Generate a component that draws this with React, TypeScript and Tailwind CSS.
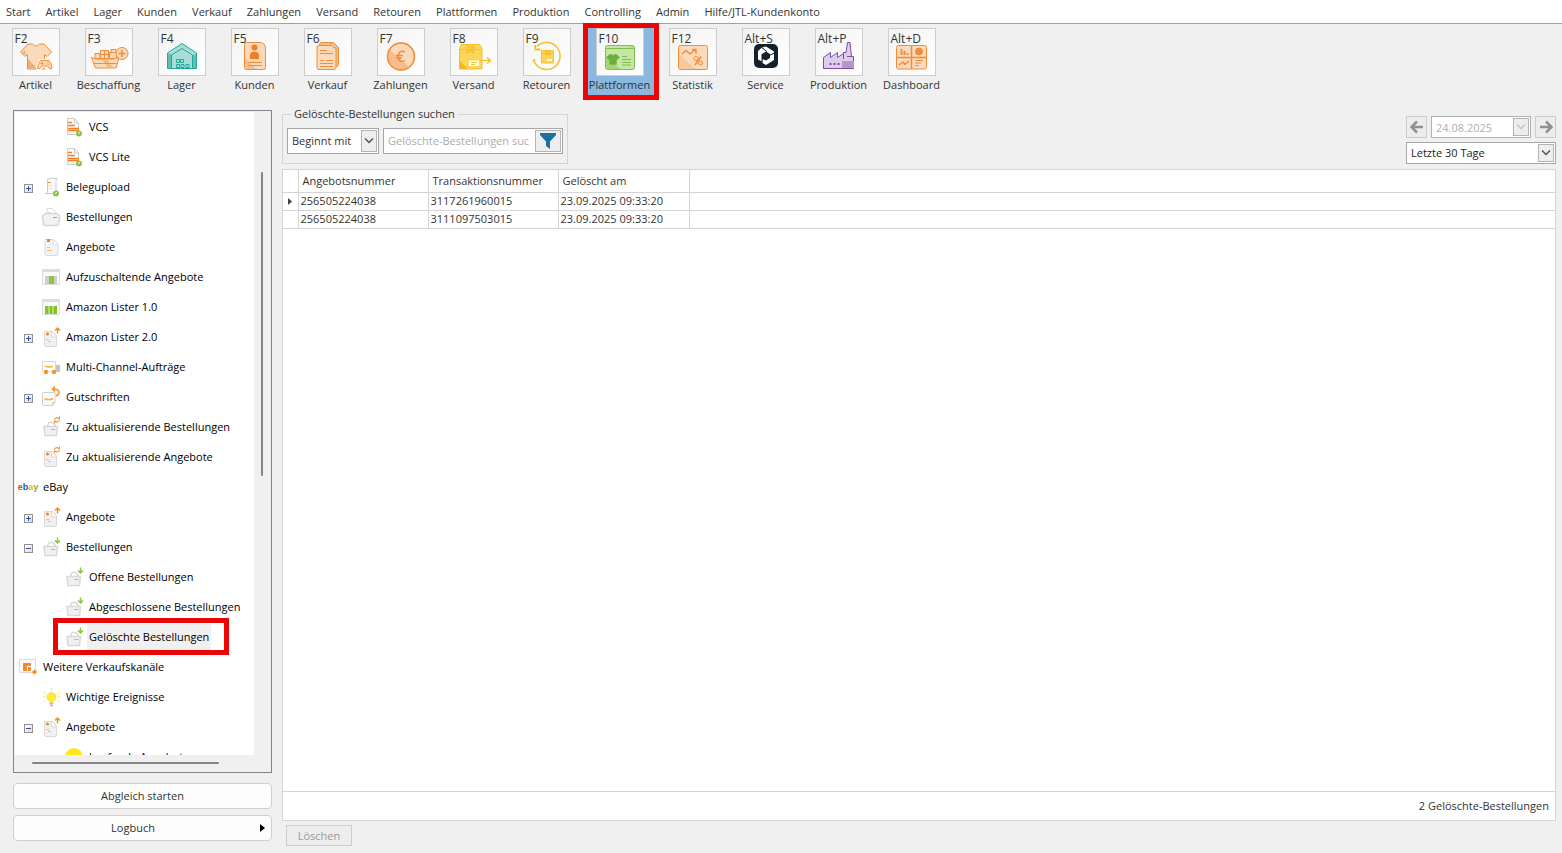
import type { ReactNode } from "react";
import clsx from "clsx";

const MENU = [
    "Start",
    "Artikel",
    "Lager",
    "Kunden",
    "Verkauf",
    "Zahlungen",
    "Versand",
    "Retouren",
    "Plattformen",
    "Produktion",
    "Controlling",
    "Admin",
    "Hilfe/JTL-Kundenkonto",
];

const ORANGE = { fill: "#fbd9bb", stroke: "#ee8e3c" };
const YELLOW = { fill: "#fcd65a", stroke: "#f6c12c" };

/* ---------- toolbar icons, drawn on the 48px tile ---------- */

const SHIRT = "M16 16h4.500q3.500 4 7 0h4.500l7.500 8-4.500 4.500-2.500-2V41H15.500V26.500l-2.500 2L8.500 24z";

const toolIcons: Record<string, ReactNode> = {
    Artikel: (
        <g {...ORANGE}>
            <path d={SHIRT} />
            <path d="M16 31l9 9.500h-9zM10 25l3-3 1 5z" fill="#f3ad70" stroke="none" />
            <path d="M28.500 32.500h8.500q2.500 2 3 8-2.500 1.500-4.500-2.500h-5.500q-2 4-4.500 2.500.500-6 3-8z" stroke="#fff" strokeWidth="3" />
            <path d="M28.500 32.500h8.500q2.500 2 3 8-2.500 1.500-4.500-2.500h-5.500q-2 4-4.500 2.500.500-6 3-8z" />
            <path d="M28.500 35.500h3M30 34v3M35.500 34.500h1M35.500 36.500h1" />
        </g>
    ),
    Beschaffung: (
        <g {...ORANGE}>
            <path d="M10 25.500h5v5h-5zM15.500 22.500h8v8h-8zM24.500 24.500h7v6h-7zM26 21.500h5v3h-5z" />
            <path d="M15.500 26.500h8M19.500 22.500v8" />
            <path d="M6.500 29.500l4 1.500h18l5.500-1.500-3 10.500H10.500z" />
            <path d="M17 31.500h5l6 8h-5zM9 36h22" fill="#f3b883" stroke="none" />
            <path d="M9 35.500h22.500" />
            <circle cx="37" cy="25.500" r="6" />
            <path d="M33.500 25.500h7M37 22v7" strokeWidth="1.500" />
        </g>
    ),
    Lager: (
        <g fill="#a9ded8" stroke="#26a69a">
            <path d="M9.500 40.500V25L24 15.500 38.500 25v15.500z" />
            <path d="M10 25.500l3.500 1V40H10zM34.500 27l3.500-1V40h-3.500z" fill="#62bdb4" stroke="none" />
            <path d="M13.500 40.500V27L24 20.500 34.500 27v13.500z" />
            <path d="M18.500 31.500h3v3h-3zM22.500 31.500h3v3h-3zM18.500 36.500h3v3h-3zM23 36.500h3v3h-3zM28 36.500h3v3h-3z" />
        </g>
    ),
    Kunden: (
        <g {...ORANGE}>
            <path d="M15.500 14.500H29q5.500.500 5.500 6V39.500q0 2-2 2h-17q-2 0-2-2v-23q0-2 2-2z" />
            <path d="M14 30l11 11H15.500q-1.500 0-1.500-2z" fill="#f6bd8b" stroke="none" />
            <circle cx="23.500" cy="19.500" r="3" fill="#ee7f22" stroke="none" />
            <path d="M19 31v-4q0-3 4.500-3.500 4.500.500 4.500 3.500v4z" fill="#ee7f22" stroke="none" />
            <path d="M17 34.500h14M17 37.500h14" />
        </g>
    ),
    Verkauf: (
        <g {...ORANGE}>
            <path d="M17.500 14.500h12l5 5v17q0 2-2 2h-15q-2 0-2-2v-20q0-2 2-2z" fill="#f6bd8b" />
            <path d="M14.500 17.500h14l3.500 3v19q0 2-2 2H15q-2 0-2-2V19q0-1.500 1.500-1.500z" />
            <path d="M26.500 14.500q1 5 5 5.500" />
            <path d="M16 22.500h7M16 25.500h13M16 32.500h4M22 32.500h7M16 35.500h13M16 38.500h13" />
        </g>
    ),
    Zahlungen: (
        <g {...ORANGE}>
            <circle cx="24" cy="28.500" r="13.500" />
            <path d="M13 22l19.500 17.500Q24 44 16 38 8 31 13 22z" fill="#f6bd8b" stroke="none" />
            <circle cx="24" cy="28.500" r="13.500" fill="none" strokeWidth="1.500" />
            <path d="M28 24q-5-2.500-6.500 2.500-1 6 3 7 2 0 3.500-1M19 27.500h7M19 30h6" fill="none" strokeWidth="1.500" />
        </g>
    ),
    Versand: (
        <g {...YELLOW}>
            <path d="M11.500 16.500h18l2.500 4v20.500H9.500V20.500z" />
            <path d="M9.500 21.500H32M17 16.500v9l3.500-2.500 3.500 2.500v-9" fill="#f9c838" />
            <path d="M10 33l8 8h-8z" fill="#f4b827" stroke="none" />
            <path d="M19 32.500h10v5.500H19z" fill="#fff" stroke="none" />
            <path d="M21 34.500h6M21 36.500h4" />
            <path d="M30 32.500h10M37 29.500l3.500 3-3.500 3" fill="none" strokeWidth="1.500" />
        </g>
    ),
    Retouren: (
        <g {...YELLOW}>
            <path d="M14 18.500A13.500 13.500 0 1 1 11 33" fill="none" strokeWidth="1.500" />
            <path d="M12 17l.500 4.500h5" fill="none" strokeWidth="2" />
            <circle cx="11" cy="32.500" r="1" />
            <path d="M18.500 22.500h12v12.500h-12z" />
            <path d="M18.500 25.500h12M22.500 22.500v5l2-1.500 2 1.500v-5" fill="#f9c838" />
            <path d="M24 31h5v2h-5z" fill="#fff" stroke="none" />
        </g>
    ),
    Plattformen: (
        <g fill="#c5e6a6" stroke="#7fc04a">
            <rect x="9.500" y="17.500" width="29" height="24" rx="2" />
            <path d="M10 28l14 13H12q-2 0-2-2z" fill="#a5d57a" stroke="none" />
            <path d="M9.500 20.500h29" />
            <path d="M34 19h1M36 19h1" />
            <path d="M13.500 26.500h2q1.500 1.500 3 0h2l3 3-2 2-1-.500v5.500h-7V31l-1 .500-2-2z" fill="#6fae3c" />
            <path d="M26 28.500h5M26 31.500h9M26 34.500h9M26 37h9" />
        </g>
    ),
    Statistik: (
        <g {...ORANGE}>
            <rect x="9.500" y="17.500" width="29" height="24" rx="2" />
            <path d="M10 26l16 15H12q-2 0-2-2z" fill="#f8c79c" stroke="none" />
            <path d="M13 26l4-3.500 4 3.500 5.500-4.500M23 21.500h4v4" fill="none" strokeWidth="1.500" />
            <circle cx="27" cy="30.500" r="2" fill="none" />
            <circle cx="31.500" cy="35" r="2" fill="none" />
            <path d="M32 28.500l-6 8.500" strokeWidth="1.500" />
        </g>
    ),
    Service: (
        <g>
            <rect x="12" y="16" width="24" height="24" rx="5" fill="#14202b" />
            <path d="M20 19.500l4-1 8 5v8.500l-8 5-3.500-2V31l3.500 1.500 4-2.500v-4l-4-2.500-4 2.500v7.500l-4-2v-8.500z" fill="#fff" />
            <path d="M19.500 19.500l5.500 4M32 25l-4.500 2.500M20 34v-8" fill="none" stroke="#14202b" />
        </g>
    ),
    Produktion: (
        <g fill="#ddcdea" stroke="#7e4fa3">
            <path d="M8.500 40.500V29.500l7-5v5l7-5v5l6-4v-1h2.500l1.500-10h2.500l1.500 14h2v12z" />
            <path d="M27 33h12v7H27z" fill="#b795d0" stroke="none" />
            <path d="M8.500 40.500h30.500M28.500 25v6M32 28.500h5" />
            <path d="M14.500 36h2M18.500 36h2M22.500 36h2" strokeWidth="2" />
        </g>
    ),
    Dashboard: (
        <g {...ORANGE}>
            <rect x="8.500" y="17.500" width="30" height="23.500" rx="2" />
            <path d="M23.500 17.500v23.500M8.500 29.500h30" strokeWidth="1.500" />
            <path d="M13.500 21v6M16.500 23v4M19.500 25v2" strokeWidth="2" />
            <circle cx="31" cy="23.500" r="3.500" fill="#ee8e3c" />
            <path d="M11 37l4-3 2 2.500 4-3.500" fill="none" strokeWidth="1.500" />
            <path d="M27 32.500h8M27 35h6M27 37.500h4" />
        </g>
    ),
};

const TOOLS = [
    { hotkey: "F2", label: "Artikel" },
    { hotkey: "F3", label: "Beschaffung" },
    { hotkey: "F4", label: "Lager" },
    { hotkey: "F5", label: "Kunden" },
    { hotkey: "F6", label: "Verkauf" },
    { hotkey: "F7", label: "Zahlungen" },
    { hotkey: "F8", label: "Versand" },
    { hotkey: "F9", label: "Retouren" },
    { hotkey: "F10", label: "Plattformen", active: true },
    { hotkey: "F12", label: "Statistik" },
    { hotkey: "Alt+S", label: "Service" },
    { hotkey: "Alt+P", label: "Produktion" },
    { hotkey: "Alt+D", label: "Dashboard" },
];

function ToolButton({ hotkey, label, active }: { hotkey: string; label: string; active?: boolean }) {
    return (
        <button
            className={clsx(
                "relative flex h-[76px] w-[73px] shrink-0 flex-col items-center pt-1",
                active && "bg-[#8ab8de]",
            )}
        >
            <span className="relative size-12 border border-[#cdcdcd] bg-linear-to-br from-[#f3f3f3] to-white">
                <svg viewBox="1 1 46 46" className="block size-full" strokeLinejoin="round" aria-hidden="true">
                    {toolIcons[label]}
                </svg>
                <span className="absolute top-0.5 left-0.5 text-[12px] leading-4">{hotkey}</span>
            </span>
            <span className="leading-[18px]">{label}</span>
            {active && <span className="absolute -top-px -right-[3px] bottom-0 left-0 z-10 border-[5px] border-[#eb0505]" />}
        </button>
    );
}

/* ---------- tree ---------- */

type TreeIcon =
    | "invoice"
    | "upload"
    | "basket"
    | "offer"
    | "windowSmall"
    | "window"
    | "offerUp"
    | "truck"
    | "credit"
    | "basketSync"
    | "offerSync"
    | "ebay"
    | "basketDown"
    | "channels"
    | "bulb"
    | "dot";

interface TreeNode {
    level: 0 | 1 | 2;
    label: string;
    icon: TreeIcon;
    expander?: "plus" | "minus";
    selected?: boolean;
}

const TREE: TreeNode[] = [
    { level: 2, label: "VCS", icon: "invoice" },
    { level: 2, label: "VCS Lite", icon: "invoice" },
    { level: 1, label: "Belegupload", icon: "upload", expander: "plus" },
    { level: 1, label: "Bestellungen", icon: "basket" },
    { level: 1, label: "Angebote", icon: "offer" },
    { level: 1, label: "Aufzuschaltende Angebote", icon: "windowSmall" },
    { level: 1, label: "Amazon Lister 1.0", icon: "window" },
    { level: 1, label: "Amazon Lister 2.0", icon: "offerUp", expander: "plus" },
    { level: 1, label: "Multi-Channel-Aufträge", icon: "truck" },
    { level: 1, label: "Gutschriften", icon: "credit", expander: "plus" },
    { level: 1, label: "Zu aktualisierende Bestellungen", icon: "basketSync" },
    { level: 1, label: "Zu aktualisierende Angebote", icon: "offerSync" },
    { level: 0, label: "eBay", icon: "ebay" },
    { level: 1, label: "Angebote", icon: "offerUp", expander: "plus" },
    { level: 1, label: "Bestellungen", icon: "basketDown", expander: "minus" },
    { level: 2, label: "Offene Bestellungen", icon: "basketDown" },
    { level: 2, label: "Abgeschlossene Bestellungen", icon: "basketDown" },
    { level: 2, label: "Gelöschte Bestellungen", icon: "basketDown", selected: true },
    { level: 0, label: "Weitere Verkaufskanäle", icon: "channels" },
    { level: 1, label: "Wichtige Ereignisse", icon: "bulb" },
    { level: 1, label: "Angebote", icon: "offerUp", expander: "minus" },
    { level: 2, label: "Laufende Angebote", icon: "dot" },
];

const basket = (
    <g fill="#f2f2f2" stroke="#d6d6d6">
        <path d="M7 8V2.500h5l4 4V8" fill="#fff" />
        <path d="M8.500 6.500h2" stroke="#f8b98a" />
        <path d="M5.500 7.500h11L19.500 10l-1 8.500q-.500 1-1.500 1H5q-1.500 0-1.500-1L2.500 10z" strokeWidth="1.500" />
        <path d="M13 11.500h4" stroke="#f8832a" />
    </g>
);

const smallBasket = (
    <g fill="#f0f0f0" stroke="#d9d9d9">
        <path d="M7 11l2-4.500h4l3 4.500" fill="#fff" strokeWidth="1.500" />
        <path d="M4 10.500h13.500l-1 9H5z" strokeWidth="1.500" />
        <path d="M11 13.500h4.500" stroke="#f8a860" />
    </g>
);

const offer = (
    <g>
        <path d="M5 3.500h8.500l4.500 5v9.500q0 1.500-1.500 1.500h-10q-1.500 0-1.500-1.500z" fill="#f4f4f4" stroke="#d9d9d9" />
        <path d="M13 4v5h5" fill="#fff" stroke="#dcdcdc" />
        <path d="M7 3h3v3H7z" fill="#f58220" />
        <path d="M7 11.500h3M7 14.500h5" stroke="#f8b98a" />
    </g>
);

const smallOffer = (
    <g>
        <path d="M4.500 5.500h8.500l3.500 4.500v9q0 1.500-1.500 1.500H6q-1.500 0-1.500-1.500z" fill="#f1f1f1" stroke="#d9d9d9" />
        <path d="M11.500 6v5h4.500" fill="#fff" stroke="#d9d9d9" />
        <circle cx="7.500" cy="8" r="1.500" fill="#f58220" />
        <path d="M6.500 13.500h2.500M8 15.500h3" stroke="#f8b98a" />
    </g>
);

const sync = (
    <g fill="none" stroke="#f58a2c">
        <path d="M14.500 4q0-2.500 2.500-2.500 1.500 0 2 1M19.500 3.500q0 2.500-2.500 2.500-1.500 0-2-1M19.500.500v2h-2M14.500 7V5h2" />
    </g>
);

const leafBadge = (
    <g>
        <circle cx="16" cy="17.500" r="3" fill="#8bc34a" />
        <path d="M15.500 18l1-2" stroke="#fff" />
    </g>
);

const treeIcons: Record<Exclude<TreeIcon, "ebay">, ReactNode> = {
    invoice: (
        <g>
            <path d="M4.500 2.500h7l4 4.500v11.500h-11z" fill="#fafafa" stroke="#cccccc" />
            <path d="M11.500 2.500V7h4" fill="none" stroke="#cccccc" />
            <path d="M5 6.500h4M5 9.500h7M5 12.500h11M5 14.500h11" stroke="#f58220" strokeWidth="1.500" />
            {leafBadge}
        </g>
    ),
    upload: (
        <g>
            <path d="M7.500 17V4q0-1.500 1.500-1.500h8.500q-1.500.500-1.500 2V16" fill="#fafafa" stroke="#cccccc" />
            <path d="M5 17.500h8" stroke="#cccccc" />
            <path d="M8 6.500h3" stroke="#f58220" />
            <path d="M8 9.500h5M8 12.500h5" stroke="#e4e4e4" />
            {leafBadge}
        </g>
    ),
    basket,
    offer,
    windowSmall: (
        <g>
            <path d="M2.500 3.500h17v15h-17z" fill="#fafafa" stroke="#dddddd" />
            <path d="M2.500 5h17" stroke="#dddddd" strokeWidth="2" />
            <path d="M5 10h4v8H5zM14 10h3v8h-3z" fill="#cfcfcf" />
            <path d="M9 10h5v8H9z" fill="#8fc63d" />
        </g>
    ),
    window: (
        <g>
            <path d="M2.500 3.500h17v15h-17z" fill="#fafafa" stroke="#dddddd" />
            <path d="M2.500 5h17" stroke="#dddddd" strokeWidth="2" />
            <path d="M5 10h12v8H5z" fill="#84c225" />
            <path d="M9 10v8M13 10v8" stroke="#e3f1d0" />
        </g>
    ),
    offerUp: (
        <g>
            {smallOffer}
            <path d="M17.500 7.500V3M15 4.500l2.500-2.500L20 4.500" fill="none" stroke="#f5921e" strokeWidth="1.500" />
        </g>
    ),
    truck: (
        <g>
            <path d="M2.500 5.500h13v10h-13z" fill="#fff" stroke="#d6d6d6" />
            <path d="M16 9h4v7h-4z" fill="#c4c4c4" />
            <path d="M5 10q4 2 8 0" fill="none" stroke="#fbb040" strokeWidth="1.500" />
            <circle cx="6" cy="16" r="2.200" fill="#f7941d" />
            <circle cx="14" cy="16" r="2.200" fill="#f7941d" />
        </g>
    ),
    credit: (
        <g>
            <path d="M4 6.500h11v10l-2.500 3H4q-1.500 0-1.500-1.500V8q0-1.500 1.500-1.500z" fill="#fcfcfc" stroke="#d0d0d0" />
            <path d="M15 16.500h-2.500v3" fill="none" stroke="#cccccc" />
            <path d="M4.500 12.500q4.500 2.500 8.500 0" fill="none" stroke="#fbb040" strokeWidth="1.500" />
            <path d="M16 10q3.500-1.500 3-4.500-1-2.500-6-2.500M15 .500L12.500 3 15 5.500" fill="none" stroke="#f7941d" strokeWidth="1.500" />
        </g>
    ),
    basketSync: (
        <g>
            {smallBasket}
            {sync}
        </g>
    ),
    offerSync: (
        <g>
            {smallOffer}
            {sync}
        </g>
    ),
    basketDown: (
        <g>
            {smallBasket}
            <path d="M17.500 1.500V6M15 4.500L17.500 7 20 4.500" fill="none" stroke="#8bc63f" strokeWidth="1.500" />
        </g>
    ),
    channels: (
        <g>
            <path d="M2.500 3.500h16v13h-16z" fill="#fdfdfd" stroke="#dadada" />
            <path d="M6 7h8v3H6zM6 10h4v5H6zM11 11h3v4h-3z" fill="#f58a2c" />
            <path d="M17.500 13.500v5M15 16h5" stroke="#f58220" strokeWidth="1.500" />
        </g>
    ),
    bulb: (
        <g>
            <circle cx="11.500" cy="11" r="4.500" fill="#ffeb3b" stroke="#d9cd5a" strokeWidth=".500" />
            <path d="M9.500 14h4v3h-4z" fill="#ffeb3b" />
            <path d="M9.500 17.500h4M10 19.500h3" stroke="#b8b8b8" strokeWidth="1.500" />
            <path d="M11.500 2v3M3.500 6.500l2 1M19.500 6.500l-2 1M3 10.500h2M18 10.500h2M3.500 16l2-1.500M19.500 16l-2-1.500" stroke="#ffe94a" />
        </g>
    ),
    dot: <circle cx="11" cy="11" r="9" fill="#ffe81f" />,
};

const EBAY = [
    { letter: "e", color: "text-[#e53238]" },
    { letter: "b", color: "text-[#0064d2]" },
    { letter: "a", color: "text-[#f5af02]" },
    { letter: "y", color: "text-[#86b817]" },
];

function TreeRow({ node }: { node: TreeNode }) {
    return (
        <li className="relative flex h-[30px] items-center pl-0.5">
            {node.level === 2 && <span className="w-[23px] shrink-0" />}
            {node.level > 0 && (
                <span className="flex w-[23px] shrink-0 justify-center">
                    {node.expander && (
                        <button
                            aria-label={node.label}
                            className="mt-0.5 size-[9px] border border-[#919191] bg-linear-to-br from-white to-[#dddddd]"
                        >
                            <svg viewBox="0 0 7 7" className="block size-[7px]" stroke="#3a4f9e">
                                <path d={node.expander === "plus" ? "M1 3.500h5M3.500 1v5" : "M1 3.500h5"} />
                            </svg>
                        </button>
                    )}
                </span>
            )}
            {node.icon === "ebay" ? (
                <span className="flex w-[22px] shrink-0 justify-center font-['Liberation_Sans',sans-serif] text-[9px] leading-3 font-bold">
                    {EBAY.map((e) => (
                        <span key={e.letter} className={e.color}>
                            {e.letter}
                        </span>
                    ))}
                </span>
            ) : (
                <svg viewBox="0 0 22 22" className="size-[22px] shrink-0" fill="none" aria-hidden="true">
                    {treeIcons[node.icon]}
                </svg>
            )}
            <a
                href="#"
                className={clsx("ml-0.5 px-0.5 leading-[26px] whitespace-nowrap text-black", node.selected && "bg-[#f0f0f0]")}
            >
                {node.label}
            </a>
            {node.selected && (
                <span className="pointer-events-none absolute -top-1 -bottom-[3px] left-[38px] w-[176px] border-[5px] border-[#eb0505]" />
            )}
        </li>
    );
}

function Sidebar() {
    return (
        <aside className="flex w-[259px] shrink-0 flex-col">
            <div className="grid min-h-0 flex-1 grid-cols-[1fr_16px] grid-rows-[1fr_16px] border border-[#83838f] bg-[#f0f0f0] p-px">
                <ul className="h-0 min-h-full overflow-hidden bg-white">
                    {TREE.map((node, i) => (
                        <TreeRow key={i} node={node} />
                    ))}
                </ul>
                <div className="flex justify-center pt-[60px]">
                    <div className="h-[304px] w-0.5 rounded-full bg-[#858585]" />
                </div>
                <div className="flex items-center pl-[17px]">
                    <div className="h-0.5 w-[187px] rounded-full bg-[#858585]" />
                </div>
            </div>
            <button className="mt-2.5 h-[26px] rounded border border-[#cfcfcf] bg-[#fdfdfd]">Abgleich starten</button>
            <button className="mt-1.5 flex h-[26px] items-center rounded border border-[#cfcfcf] bg-[#fdfdfd] pr-1.5">
                <span className="flex-1 pr-2">Logbuch</span>
                <svg viewBox="0 0 5 8" className="h-2 w-[5px]">
                    <path d="M0 0l5 4-5 4z" fill="#000" />
                </svg>
            </button>
        </aside>
    );
}

/* ---------- main area ---------- */

function DropArrow({ disabled }: { disabled?: boolean }) {
    return (
        <span className="pointer-events-none absolute inset-y-0.5 right-0.5 flex w-4 items-center justify-center border border-[#b4b4b4] bg-[#eeeeee]">
            <svg viewBox="0 0 10 6" className="h-1.5 w-2.5" fill="none" stroke={disabled ? "#c4c4c4" : "#555555"} strokeWidth="1.500">
                <path d="M1 .500l4 4 4-4" />
            </svg>
        </span>
    );
}

function ArrowButton({ label, d }: { label: string; d: string }) {
    return (
        <button aria-label={label} className="flex h-[22px] w-[21px] items-center justify-center border border-[#cccccc] bg-[#ededed]">
            <svg viewBox="0 0 14 14" className="size-3.5" fill="none" stroke="#919191" strokeWidth="2.500">
                <path d={d} />
            </svg>
        </button>
    );
}

function SearchBox() {
    return (
        <fieldset className="h-[57px] w-[286px] border border-[#d5d5d5] px-1">
            <legend className="ml-1 px-[3px] leading-[14px]">Gelöschte-Bestellungen suchen</legend>
            <div className="mt-[7px] flex gap-1">
                <div className="relative w-[92px]">
                    <select
                        aria-label="Suchmodus"
                        className="block h-[26px] w-full appearance-none border border-[#a6a6a6] bg-white pl-1 outline-none"
                    >
                        <option>Beginnt mit</option>
                    </select>
                    <DropArrow />
                </div>
                <div className="flex h-[26px] flex-1 border border-[#a6a6a6] bg-white p-px">
                    <input
                        aria-label="Gelöschte-Bestellungen suchen"
                        placeholder="Gelöschte-Bestellungen suchen"
                        className="mr-1.5 ml-[3px] w-0 flex-1 outline-none placeholder:text-[#acacac]"
                    />
                    <button aria-label="Filtern" className="flex w-[26px] items-center justify-center border border-[#b4b4b4] bg-[#eeeeee]">
                        <svg viewBox="0 0 16 16" className="size-4">
                            <path d="M0 0h16v2L10 8.500V16L6 13V8.500L0 2z" fill="#1d6fa5" />
                        </svg>
                    </button>
                </div>
            </div>
        </fieldset>
    );
}

function DateRange() {
    return (
        <div className="flex w-[150px] flex-col gap-1">
            <div className="flex gap-1">
                <ArrowButton label="Zurück" d="M13 7H2M7 1.500L1.500 7 7 12.500" />
                <div className="relative flex-1">
                    <input
                        aria-label="Datum"
                        disabled
                        defaultValue="24.08.2025"
                        className="block h-[22px] w-full border border-[#b0b0b0] bg-white pl-1 text-[#b0b0b0]"
                    />
                    <DropArrow disabled />
                </div>
                <ArrowButton label="Weiter" d="M1 7h11M7 1.500L12.500 7 7 12.500" />
            </div>
            <div className="relative">
                <select
                    aria-label="Zeitraum"
                    className="block h-[22px] w-full appearance-none border border-[#a6a6a6] bg-white pl-1 text-[#222222] outline-none"
                >
                    <option>Letzte 30 Tage</option>
                </select>
                <DropArrow />
            </div>
        </div>
    );
}

const ORDERS = [
    { offer: "256505224038", transaction: "3117261960015", deleted: "23.09.2025 09:33:20" },
    { offer: "256505224038", transaction: "3111097503015", deleted: "23.09.2025 09:33:20" },
];

function OrderTable() {
    return (
        <div className="mt-[5px] flex min-h-0 flex-1 flex-col border border-[#d5d5d5] bg-white">
            <div className="min-h-0 flex-1">
                <table className="w-full table-fixed border-collapse text-left">
                    <colgroup>
                        <col className="w-[15px]" />
                        <col className="w-[130px]" />
                        <col className="w-[130px]" />
                        <col className="w-[131px]" />
                        <col />
                    </colgroup>
                    <thead>
                        <tr className="h-[22px] border-b border-[#d5d5d5]">
                            <th className="border-r border-[#d5d5d5]" />
                            <th className="border-r border-[#d5d5d5] pl-1 font-normal">Angebotsnummer</th>
                            <th className="border-r border-[#d5d5d5] pl-1 font-normal">Transaktionsnummer</th>
                            <th className="border-r border-[#d5d5d5] pl-1 font-normal">Gelöscht am</th>
                            <th />
                        </tr>
                    </thead>
                    <tbody>
                        {ORDERS.map((order, i) => (
                            <tr key={order.transaction} className="h-[18px] border-b border-[#d5d5d5] leading-4">
                                <td className="border-r border-[#d5d5d5]">
                                    {i === 0 && (
                                        <svg viewBox="0 0 4 7" className="mx-auto h-[7px] w-1">
                                            <path d="M0 0l4 3.500L0 7z" fill="#444444" />
                                        </svg>
                                    )}
                                </td>
                                <td className="border-r border-[#d5d5d5] pl-0.5">{order.offer}</td>
                                <td className="border-r border-[#d5d5d5] pl-0.5">{order.transaction}</td>
                                <td className="border-r border-[#d5d5d5] pl-0.5">{order.deleted}</td>
                                <td />
                            </tr>
                        ))}
                    </tbody>
                </table>
            </div>
            <div className="flex h-[29px] items-center justify-end border-t border-[#d5d5d5] pr-1.5">2 Gelöschte-Bestellungen</div>
        </div>
    );
}

export default function App() {
    return (
        <div className="flex h-screen flex-col overflow-hidden bg-[#f0f0f0] font-['Open_Sans',sans-serif] text-[11px] leading-4 text-[#333333]">
            <nav className="h-6 shrink-0 border-b border-[#a0a0a0] bg-white">
                <ul className="flex h-full w-[826px] items-center justify-between px-1.5">
                    {MENU.map((item) => (
                        <li key={item}>
                            <a href="#">{item}</a>
                        </li>
                    ))}
                </ul>
            </nav>
            <div className="-ml-px flex shrink-0">
                {TOOLS.map((tool) => (
                    <ToolButton key={tool.label} {...tool} />
                ))}
            </div>
            <div className="flex min-h-0 flex-1 gap-2.5 pt-2.5 pr-1.5 pl-[13px]">
                <div className="flex pb-3">
                    <Sidebar />
                </div>
                <main className="flex min-w-0 flex-1 flex-col pb-[7px]">
                    <div className="flex items-end justify-between">
                        <div className="-mt-[3px]">
                            <SearchBox />
                        </div>
                        <DateRange />
                    </div>
                    <OrderTable />
                    <button
                        disabled
                        className="mt-1 ml-1 h-[21px] w-[66px] shrink-0 border border-[#cccccc] bg-[#ededed] text-[#9a9a9a]"
                    >
                        Löschen
                    </button>
                </main>
            </div>
        </div>
    );
}
